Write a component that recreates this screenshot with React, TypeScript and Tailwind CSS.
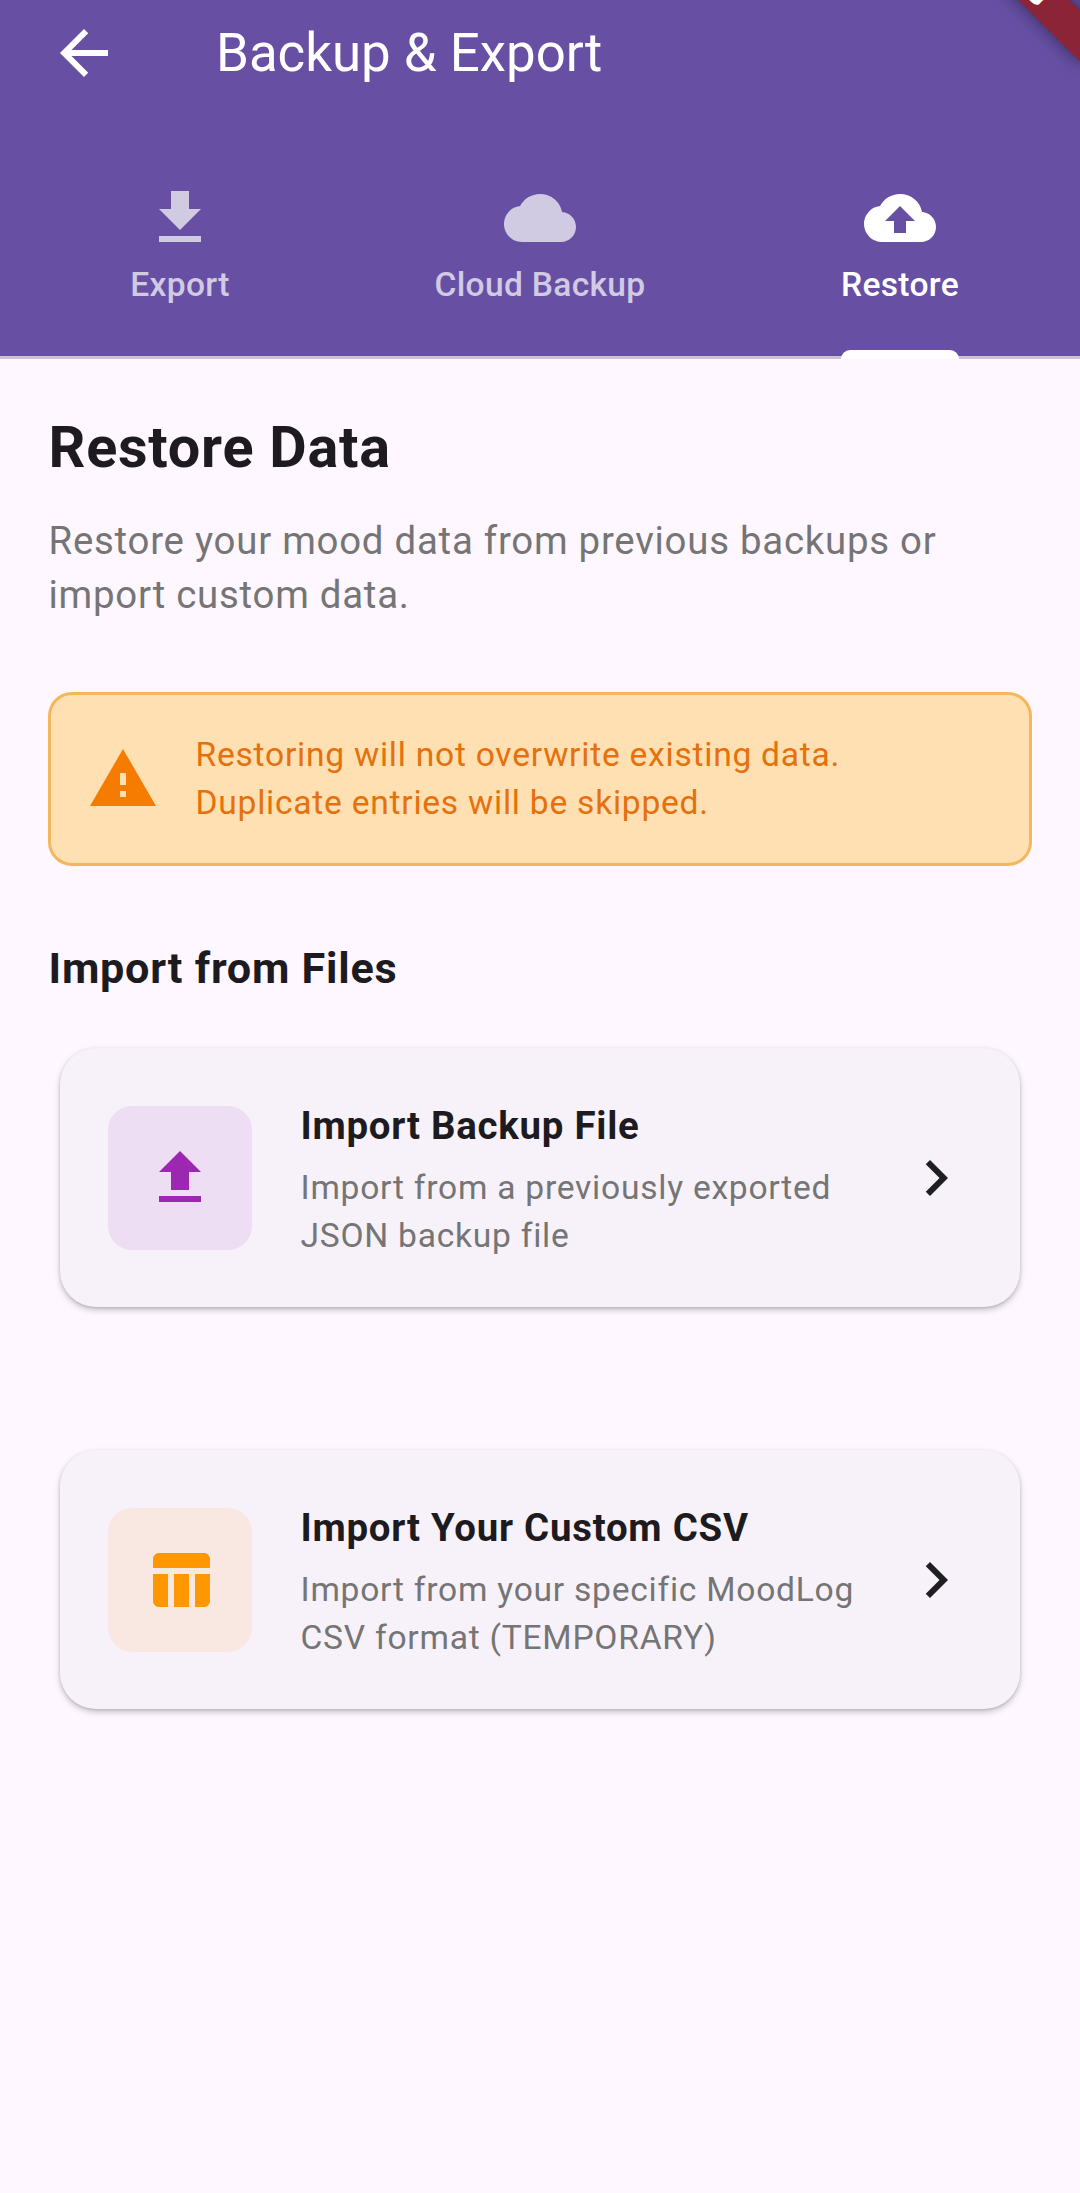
import React from 'react';
import {
  MdArrowBack,
  MdChevronRight,
  MdCloud,
  MdCloudUpload,
  MdFileDownload,
  MdFileUpload,
  MdTableChart,
  MdWarning,
} from 'react-icons/md';
import type { IconType } from 'react-icons';

type TabProps = { icon: IconType; label: string; active?: boolean };

function Tab({ icon: Icon, label, active = false }: TabProps) {
  return (
    <button
      className={`flex flex-1 flex-col items-center ${active ? 'text-white' : 'text-[#d1cae3]'}`}
    >
      <span className="relative flex h-full flex-col items-center">
        <Icon className="size-[72px]" />
        <span className="mt-[7px] text-[33.6px] leading-[48px] font-medium tracking-[0.3px]">
          {label}
        </span>
        {active && (
          <span className="absolute inset-x-0 bottom-0 z-10 h-[9px] rounded-t-[9px] bg-white" />
        )}
      </span>
    </button>
  );
}

type ImportCardProps = {
  icon: IconType;
  tint: string;
  title: string;
  lines: [string, string];
};

function ImportCard({ icon: Icon, tint, title, lines }: ImportCardProps) {
  return (
    <button className="mx-3 flex h-[259px] items-center rounded-[36px] bg-[#f7f2fa] px-12 text-left shadow-[0_3px_6px_rgba(0,0,0,0.22),0_1px_3px_rgba(0,0,0,0.12)]">
      <span className={`mt-[1px] flex size-36 shrink-0 items-center justify-center rounded-3xl ${tint}`}>
        <Icon className="size-[72px]" />
      </span>
      <span className="mt-[4px] ml-12 flex flex-1 flex-col pl-[0.5px]">
        <span className="text-[38.4px] leading-[54px] font-bold tracking-[0.75px] text-[#1d1b20]">
          {title}
        </span>
        <span className="mt-[11px] text-[33.6px] leading-[48px] tracking-[0.75px] text-[#757575]">
          {lines[0]}
          <br />
          {lines[1]}
        </span>
      </span>
      <MdChevronRight className="mt-[1px] size-[72px] shrink-0 text-[#1f1f21]" />
    </button>
  );
}

export default function App() {
  return (
    <div className="flex h-[2193px] w-[1080px] flex-col overflow-hidden bg-[#fef7ff] font-[Roboto,sans-serif]">
      <header className="relative flex h-[358.5px] shrink-0 flex-col overflow-hidden bg-[#6750a4]">
        <div className="flex h-[105px] items-center pl-12 text-white">
          <MdArrowBack className="size-[72px]" />
          <h1 className="ml-24 text-[52.8px] leading-[66px]">Backup &amp; Export</h1>
        </div>
        <nav className="flex flex-1 border-b-[3px] border-[#cac4d0] pt-[77px] [&>button]:-mb-[3px]">
          <Tab icon={MdFileDownload} label="Export" />
          <Tab icon={MdCloud} label="Cloud Backup" />
          <Tab icon={MdCloudUpload} label="Restore" active />
        </nav>
        {/* Corner ribbon, mostly above the visible edge */}
        <div className="absolute -top-[52px] -right-[49.5px] flex h-9 w-60 rotate-45 items-center justify-center bg-[#8c2438] text-[30.6px] leading-none font-black text-white shadow-[0_0_18px_rgba(0,0,0,0.5)]">
          DEBUG
        </div>
      </header>

      <main className="flex flex-col px-12 pt-[48.5px]">
        <h2 className="pl-[0.5px] text-[57.6px] leading-[81px] font-bold tracking-[0.75px] text-[#1d1b20]">
          Restore Data
        </h2>
        <p className="mt-[25.5px] pl-[0.5px] text-[38.4px] leading-[54px] tracking-[0.75px] text-[#757575]">
          Restore your mood data from previous backups or
          <br />
          import custom data.
        </p>

        <div className="mt-[70.5px] flex h-[174px] items-center rounded-3xl border-[3px] border-[#f5b75c] bg-[#ffe0b2] px-9">
          <MdWarning className="size-[72px] shrink-0 text-[#f57c00]" />
          <p className="ml-9 pl-[0.5px] text-[33.6px] leading-[48px] tracking-[0.75px] text-[#e5710c]">
            Restoring will not overwrite existing data.
            <br />
            Duplicate entries will be skipped.
          </p>
        </div>

        <h3 className="mt-[73px] pl-[0.5px] text-[43.2px] leading-[60px] font-bold tracking-[0.75px] text-[#1d1b20]">
          Import from Files
        </h3>

        <div className="mt-[49px] flex flex-col gap-[143px]">
          <ImportCard
            icon={MdFileUpload}
            tint="bg-[#eedef3] text-[#9c27b0]"
            title="Import Backup File"
            lines={['Import from a previously exported', 'JSON backup file']}
          />
          <ImportCard
            icon={MdTableChart}
            tint="bg-[#f9e8e2] text-[#ff9800]"
            title="Import Your Custom CSV"
            lines={['Import from your specific MoodLog', 'CSV format (TEMPORARY)']}
          />
        </div>
      </main>
    </div>
  );
}
